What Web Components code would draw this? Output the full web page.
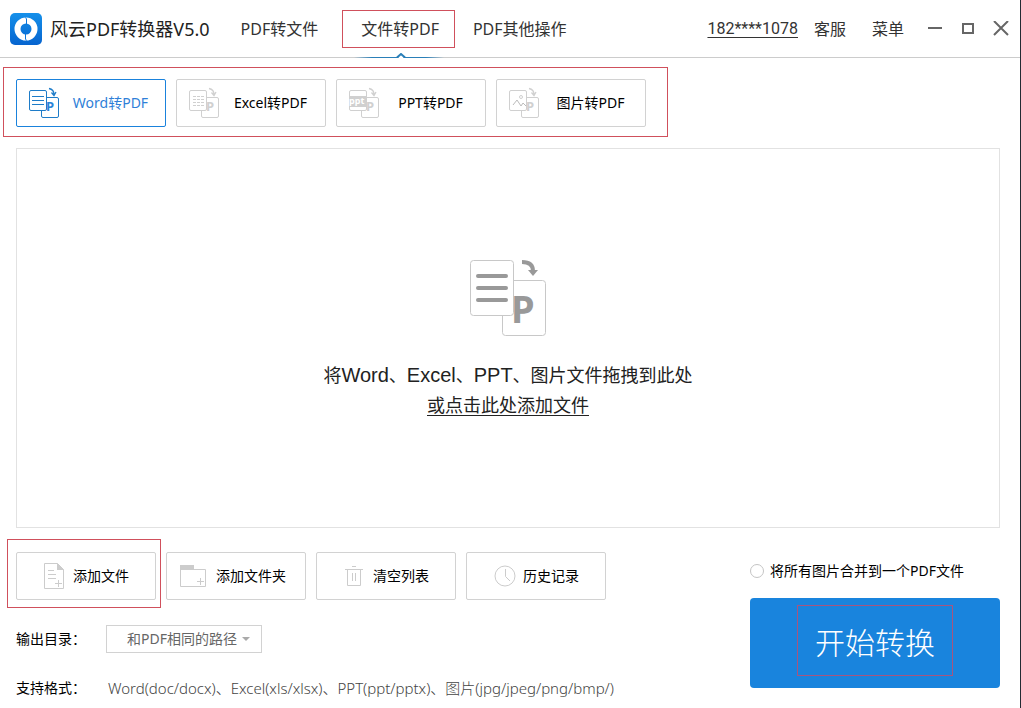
<!DOCTYPE html>
<html lang="zh-CN">
<head>
    <meta charset="UTF-8">
    <meta name="viewport" content="width=device-width, initial-scale=1.0">
    <title>风云PDF转换器</title>
    <style>
        html {
            --blue: #1a82dc;
            --line: #d2d2d2;
            --mark: #d0505c;
            --ui: "Noto Sans", "Noto Sans CJK SC", sans-serif;
        }
        body {
            margin: 0;
            color: #000;
            background: #fff;
            font: 14px/20px var(--ui);
        }
    </style>
</head>
<body>
    <pdf-app></pdf-app>

    <template id="pdf-app">
        <style>
            :host {
                display: flex;
                flex-direction: column;
                box-sizing: border-box;
                min-height: 100vh;
                border-right: 1px solid #222b33;
            }
            .formats {
                display: flex;
                align-self: flex-start;
                gap: 10px;
                margin: 9px 0 11px 3px;
                padding: 11px 21px 9px 12px;
                border: 1px solid var(--mark);
            }
            drop-zone {
                flex: 1;
                margin: 0 20px 11px 16px;
            }
            footer {
                display: flex;
                justify-content: space-between;
                padding: 0 20px 6px 7px;
            }
            .tools {
                display: flex;
                align-items: center;
                gap: 10px;
            }
            .marked {
                margin-right: -5px;
                padding: 12px 4px 7px 8px;
                border: 1px solid var(--mark);
            }
            .tools > tool-button {
                margin-top: 5px;
            }
            output-settings {
                margin: 17px 0 0 9px;
            }
            convert-panel {
                width: 250px;
                margin-top: 18px;
            }
        </style>
        <app-header></app-header>
        <nav class="formats">
            <format-tab kind="word" active>Word转PDF</format-tab>
            <format-tab kind="excel">Excel转PDF</format-tab>
            <format-tab kind="ppt">PPT转PDF</format-tab>
            <format-tab kind="image">图片转PDF</format-tab>
        </nav>
        <drop-zone></drop-zone>
        <footer>
            <div>
                <div class="tools">
                    <div class="marked"><tool-button icon="file">添加文件</tool-button></div>
                    <tool-button icon="folder">添加文件夹</tool-button>
                    <tool-button icon="trash">清空列表</tool-button>
                    <tool-button icon="clock">历史记录</tool-button>
                </div>
                <output-settings></output-settings>
            </div>
            <convert-panel></convert-panel>
        </footer>
    </template>

    <template id="app-header">
        <style>
            :host {
                display: flex;
                align-items: center;
                height: 58px;
                padding: 0 11px 0 10px;
                color: #333;
                font-size: 16px;
                box-shadow: inset 0 -1px #ccc;
            }
            .logo { margin-right: 8px; }
            h1 {
                margin: 0 30px 0 0;
                color: #222;
                font-size: 18px;
                font-weight: 400;
            }
            nav {
                display: flex;
                align-self: stretch;
            }
            .account {
                margin-left: auto;
                color: inherit;
                font-family: Roboto, sans-serif;
                text-underline-offset: 3px;
            }
            button {
                padding: 0;
                border: 0;
                background: none;
                color: inherit;
                font: inherit;
            }
            .service { margin: 0 26px 0 16px; }
            .window {
                display: flex;
                gap: 17px;
                margin-left: 23px;
            }
            .window button, svg { display: block; }
        </style>
        <svg class="logo" width="32" height="32" viewBox="0 0 32 32">
            <defs>
                <linearGradient id="g" x2="0" y2="1">
                    <stop stop-color="#1590ea"/>
                    <stop offset="1" stop-color="#0664cf"/>
                </linearGradient>
            </defs>
            <rect width="32" height="32" rx="5" fill="url(#g)"/>
            <circle cx="16" cy="16" r="8.5" fill="none" stroke="#fff" stroke-width="6"/>
            <path d="M15.500 4.500l1 1.500v5l-1 1M16.500 27.500l-1-1.500v-5l1-1" fill="none" stroke="#0b76db"/>
        </svg>
        <h1>风云PDF转换器V5.0</h1>
        <nav>
            <nav-item>PDF转文件</nav-item>
            <nav-item active>文件转PDF</nav-item>
            <nav-item>PDF其他操作</nav-item>
        </nav>
        <a class="account" href="#account">182****1078</a>
        <button class="service">客服</button>
        <button>菜单</button>
        <div class="window">
            <button aria-label="最小化"><svg width="16" height="16" fill="none" stroke="#666" stroke-width="2"><path d="M1 7h14"/></svg></button>
            <button aria-label="最大化"><svg width="16" height="16" fill="none" stroke="#666" stroke-width="2"><path d="M3 3h10v9H3z"/></svg></button>
            <button aria-label="关闭"><svg width="16" height="16" fill="none" stroke="#666" stroke-width="2"><path d="M1 0l14 14M15 0L1 14"/></svg></button>
        </div>
    </template>

    <template id="nav-item">
        <style>
            :host {
                display: flex;
                flex-direction: column;
                align-items: center;
                padding-top: 10px;
            }
            a {
                border: 1px solid transparent;
                color: inherit;
                line-height: 36px;
                text-decoration: none;
            }
            svg { display: none; margin-top: 5px; }
            :host([active]) { margin: 0 17px 0 23px; }
            :host([active]) a {
                padding: 0 15px 0 18px;
                border-color: var(--mark);
            }
            :host([active]) svg { display: block; }
        </style>
        <a href="#"><slot></slot></a>
        <svg width="90" height="5" viewBox="0 0 90 5">
            <defs>
                <linearGradient id="g">
                    <stop stop-color="#2a7fb8" stop-opacity="0"/>
                    <stop offset=".2" stop-color="#2a7fb8"/>
                    <stop offset=".8" stop-color="#2a7fb8"/>
                    <stop offset="1" stop-color="#2a7fb8" stop-opacity="0"/>
                </linearGradient>
            </defs>
            <rect y="4" width="90" height="1" fill="url(#g)"/>
            <path d="M44 5h6l-3-3z" fill="#fff"/>
            <path d="M43 4.500l4-3.500 4 3.500" fill="none" stroke="#2a7fb8" stroke-width="2"/>
        </svg>
    </template>

    <template id="format-tab">
        <style>
            :host { display: block; }
            button {
                display: flex;
                align-items: center;
                box-sizing: border-box;
                width: 150px;
                height: 48px;
                padding: 0 4px 0 11px;
                border: 1px solid var(--line);
                border-radius: 2px;
                background: #fff;
                color: #000;
                font: inherit;
            }
            :host([active]) button {
                border-color: var(--blue);
                color: #2f7fd8;
            }
            .label { flex: 1; text-align: center; }
            svg {
                fill: #fff;
                stroke: #d0d0d0;
            }
            :host([active]) svg { stroke: #1e7cc8; }
            text {
                fill: #d0d0d0;
                stroke: none;
                font: bold 13px "Noto Sans", sans-serif;
            }
            .ppt { font: bold 9px "Noto Sans", sans-serif; fill: #fff; }
            :host([active]) text { fill: #2a84d8; }
        </style>
        <button>
            <svg width="32" height="34" viewBox="0 0 32 34">
                <rect x="13.500" y="11.500" width="17" height="20" rx="1.500"/>
                <rect x="1.500" y="4.500" width="17" height="20" rx="1.500"/>
                <g class="detail"></g>
                <text x="18" y="25">P</text>
                <path d="M21 2.500q5 1 5 6M23.500 6.500l2.500 3 2-3.500" fill="none" stroke-width="1.300"/>
            </svg>
            <span class="label"><slot></slot></span>
        </button>
    </template>

    <template id="drop-zone">
        <style>
            :host {
                display: flex;
                flex-direction: column;
                align-items: center;
                justify-content: center;
                border: 1px solid #e2e2e2;
                color: #222;
                font: 18px/30px "Liberation Sans", "Noto Sans CJK SC", sans-serif;
            }
            svg { margin-bottom: 22px; }
            p { margin: 0; }
            p span { font-size: 20px; }
            a { color: inherit; text-underline-offset: 3px; }
            text { font: bold 38px "Noto Sans", sans-serif; }
        </style>
        <svg width="80" height="82" viewBox="0 0 80 82" fill="#fff" stroke="#c8c8c8">
            <rect x="34.500" y="24.500" width="43" height="55" rx="3"/>
            <rect x="2.500" y="4.500" width="43" height="55" rx="3"/>
            <path d="M10 20h28M10 32h28M10 44h28" stroke="#999" stroke-width="4" stroke-linecap="round"/>
            <text x="43" y="67" fill="#999" stroke="none">P</text>
            <path d="M54 6c7 0 11 3 11 9" fill="none" stroke="#999" stroke-width="4"/>
            <path d="M60 14h10l-5 6z" fill="#999" stroke="none"/>
        </svg>
        <p>将<span>Word</span>、<span>Excel</span>、<span>PPT</span>、图片文件拖拽到此处</p>
        <p><a href="#add">或点击此处添加文件</a></p>
    </template>

    <template id="tool-button">
        <style>
            :host { display: block; }
            button {
                display: flex;
                align-items: center;
                justify-content: center;
                box-sizing: border-box;
                width: 140px;
                height: 48px;
                padding: 0;
                border: 1px solid var(--line);
                border-radius: 2px;
                background: #fff;
                color: #000;
                font: inherit;
            }
            svg {
                overflow: visible;
                fill: none;
                stroke: #ccc;
            }
        </style>
        <button>
            <svg width="30" height="30" viewBox="0 0 30 30"></svg>
            <slot></slot>
        </button>
    </template>

    <template id="output-settings">
        <style>
            :host {
                display: grid;
                grid-template-columns: 90px auto;
                row-gap: 21px;
                justify-content: start;
                line-height: 28px;
            }
            .select {
                display: flex;
                align-items: center;
                box-sizing: border-box;
                width: 156px;
                height: 28px;
                border: 1px solid var(--line);
            }
            select {
                flex: 1;
                min-width: 0;
                padding: 0 0 0 20px;
                border: 0;
                appearance: none;
                background: none;
                color: #666;
                font: inherit;
            }
            svg { margin-right: 11px; }
            .list {
                padding-left: 2px;
                color: #444;
                font-size: 15px;
                font-weight: 300;
            }
        </style>
        <label for="dir">输出目录：</label>
        <div class="select">
            <select id="dir"><option>和PDF相同的路径</option></select>
            <svg width="8" height="4"><path d="M0 0h8L4 4z" fill="#aaa"/></svg>
        </div>
        <span>支持格式：</span>
        <span class="list">Word(doc/docx)、Excel(xls/xlsx)、PPT(ppt/pptx)、图片(jpg/jpeg/png/bmp/)</span>
    </template>

    <template id="convert-panel">
        <style>
            :host { display: block; }
            label {
                display: flex;
                align-items: center;
                gap: 6px;
                height: 28px;
                margin-bottom: 13px;
            }
            input {
                width: 14px;
                height: 14px;
                margin: 0;
                border: 1px solid #c4c4c4;
                border-radius: 50%;
                appearance: none;
            }
            button {
                display: flex;
                align-items: flex-start;
                justify-content: center;
                width: 100%;
                height: 90px;
                padding: 7px 0 0;
                border: 0;
                border-radius: 4px;
                background: #1984dd;
                color: #fff;
                font: inherit;
                font-size: 30px;
                font-weight: 300;
            }
            button span {
                padding: 4px 17px 0;
                border: 1px solid #a8557f;
                line-height: 65px;
            }
        </style>
        <label><input type="radio" name="merge">将所有图片合并到一个PDF文件</label>
        <button><span>开始转换</span></button>
    </template>

    <script>
        // what is drawn on the front sheet of each format icon
        const details = {
            word: '<path d="M4 10.500h12M4 14.500h12M4 18.500h12"/>',
            excel: '<path d="M5 10.500h11M5 13.500h11M5 16.500h11M5 19.500h11" stroke-dasharray="3 1"/>',
            ppt: '<path d="M1 10h18v11H1z" fill="#d0d0d0" stroke="none"/><text class="ppt" x="1" y="18">ppt</text>',
            image: '<circle cx="13" cy="11" r="1.500"/><path d="M5 19l4-5 4 6 2-3 3 3" fill="none" stroke="#bbb"/>'
        }

        const icons = {
            file: '<path d="M1.500 2.500h13l6 6v19h-19z"/><path d="M14 2v7h7z" fill="#ccc" stroke="none"/><path d="M5 9.500h6M5 13.500h8M5 17.500h8M12 22.500h7M15.500 19v7"/>',
            folder: '<path d="M-5.500 8.500h25v17h-25z"/><path d="M-6 4h14v5H-6z" fill="#ccc" stroke="none"/><path d="M11 20.500h7M14.500 17v7"/>',
            trash: '<path d="M2 8.500h18M9 5.500h4M4.500 8.500v16h13v-16M9.500 12v8M12.500 12v8"/>',
            clock: '<circle cx="12" cy="15" r="10"/><path d="M12.500 8v7.500l4.500 4.500"/>'
        }

        const PdfElement = class extends HTMLElement {
            constructor(){
                super()
                const template = document.getElementById(this.localName)
                this.attachShadow({ mode: 'open' }).appendChild(template.content.cloneNode(true))
            }
        }

        const FormatTab = class extends PdfElement {
            connectedCallback(){
                this.shadowRoot.querySelector('.detail').innerHTML = details[this.getAttribute('kind')]
            }
        }

        const ToolButton = class extends PdfElement {
            connectedCallback(){
                this.shadowRoot.querySelector('svg').innerHTML = icons[this.getAttribute('icon')]
            }
        }

        customElements.define('nav-item', class extends PdfElement {})
        customElements.define('app-header', class extends PdfElement {})
        customElements.define('format-tab', FormatTab)
        customElements.define('drop-zone', class extends PdfElement {})
        customElements.define('tool-button', ToolButton)
        customElements.define('output-settings', class extends PdfElement {})
        customElements.define('convert-panel', class extends PdfElement {})
        customElements.define('pdf-app', class extends PdfElement {})
    </script>
</body>
</html>
